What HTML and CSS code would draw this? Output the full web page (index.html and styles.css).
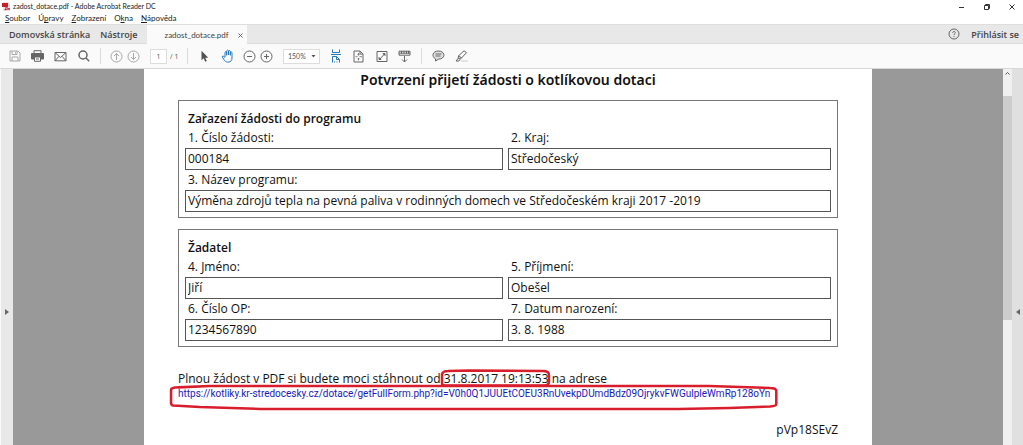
FILE: index.html
```html
<!DOCTYPE html>
<html lang="cs">
<head>
<meta charset="utf-8">
<meta name="viewport" content="width=device-width, initial-scale=1">
<title>zadost_dotace.pdf - Adobe Acrobat Reader DC</title>
<link rel="stylesheet" href="styles.css">
</head>
<body>
<div class="app">
  <header class="titlebar">
    <svg class="app-icon" width="9" height="9" viewBox="0 0 9 9"><path d="M1 0h5l2 2v7H1z" fill="#f5dcdc"/><path d="M0 1h6v4H0z" fill="#c8202a"/><path d="M3 8c1-2 1-3 1-4 1 2 2 3 4 3-2 0-4 0-5 1z" fill="none" stroke="#b8202a"/></svg>
    <span class="app-title">zadost_dotace.pdf - Adobe Acrobat Reader DC</span>
    <div class="window-controls">
      <button type="button" aria-label="Minimalizovat"><svg width="8" height="8" viewBox="0 0 8 8"><path d="M1 4.500h5"/></svg></button>
      <button type="button" aria-label="Obnovit"><svg width="8" height="8" viewBox="0 0 8 8"><path d="M1.500 2.500h4v4h-4zM2.500 2.500v-1h4v4h-1"/></svg></button>
      <button type="button" aria-label="Zavřít"><svg width="8" height="8" viewBox="0 0 8 8"><path d="M1.500 1.500l5 5m0-5l-5 5"/></svg></button>
    </div>
  </header>
  <nav class="menubar">
    <button type="button"><u>S</u>oubor</button>
    <button type="button">Ú<u>p</u>ravy</button>
    <button type="button"><u>Z</u>obrazení</button>
    <button type="button">O<u>k</u>na</button>
    <button type="button"><u>N</u>ápověda</button>
  </nav>
  <div class="tabbar">
    <div class="home-tabs">
      <button type="button">Domovská stránka</button>
      <button type="button">Nástroje</button>
    </div>
    <div class="doc-tab">
      <button type="button" class="doc-name">zadost_dotace.pdf</button>
      <button type="button" aria-label="Zavřít kartu"><svg width="5" height="5" viewBox="0 0 5 5"><path d="M.5.5l4 4m0-4l-4 4" stroke="#666"/></svg></button>
    </div>
    <div class="account">
      <button type="button" aria-label="Nápověda"><svg class="icon" width="12" height="12" viewBox="0 0 12 12"><circle cx="6" cy="6" r="5"/><path d="M4.600 4.800C4.700 3 7.400 3.100 7.300 4.700 7.200 5.600 6 5.700 6 6.900M6 7.900v1"/></svg></button>
      <button type="button" class="sign-in">Přihlásit se</button>
    </div>
  </div>
  <div class="toolbar">
    <button type="button" class="tool faint" aria-label="Uložit"><svg class="icon" width="12" height="12" viewBox="0 0 12 12"><path d="M1 1h8l2 2v8H1zM3 1v3.500h5V1M3 11V7h6v4M6.500 2v1.500"/></svg></button>
    <button type="button" class="tool" aria-label="Tisk"><svg class="icon" width="13" height="12" viewBox="0 0 13 12"><path d="M3 3V.7h7V3"/><path d="M.5 3.500h12v5.500H10V7H3v2H.5z" fill="#666"/><path d="M3.500 7v4.300h6V7M5 9h3"/></svg></button>
    <button type="button" class="tool" aria-label="E-mail"><svg class="icon" width="13" height="11" viewBox="0 0 13 11"><path d="M1 1.500h11v8.300H1zM1 1.500l5.500 5 5.500-5M1 9.800l4-4.500M12 9.800L8 5.300"/></svg></button>
    <button type="button" class="tool" aria-label="Hledat"><svg class="icon thick" width="12" height="12" viewBox="0 0 12 12"><circle cx="5" cy="5" r="4"/><path d="M8 8l3.200 3.200"/></svg></button>
    <span class="separator"></span>
    <span class="page-group">
      <button type="button" class="tool narrow faint" aria-label="Předchozí strana"><svg class="icon" width="13" height="13" viewBox="0 0 13 13"><circle cx="6.500" cy="6.500" r="5.500"/><path d="M6.500 10V3.500M4 6l2.500-2.500L9 6"/></svg></button>
      <button type="button" class="tool narrow faint" aria-label="Další strana"><svg class="icon" width="13" height="13" viewBox="0 0 13 13"><circle cx="6.500" cy="6.500" r="5.500"/><path d="M6.500 3v6.500M4 7l2.500 2.500L9 7"/></svg></button>
      <input class="page-number" type="text" value="1" aria-label="Strana">
      <span class="page-total">/ 1</span>
    </span>
    <span class="separator"></span>
    <button type="button" class="tool" aria-label="Výběr"><svg width="9" height="13" viewBox="0 0 9 13"><path d="M1.500.8v9.500l2.200-2 1.500 3.500 1.600-.7-1.500-3.400h3z" fill="#505050"/></svg></button>
    <button type="button" class="tool blue" aria-label="Ruka"><svg class="icon" width="14" height="14" viewBox="0 0 14 14"><path d="M4 8V3.200q.9-1.200 1.700 0V6.500M5.700 6V1.800q.9-1.300 1.800 0V6M7.500 6V2.200q.9-1.200 1.800 0V6.500M9.300 6V3.500q.9-1 1.700 0V9c0 5-5.600 5-7.500 2.500L1.200 7.800Q1.500 6.500 2.800 7.200L4 8.800"/></svg></button>
    <span class="zoom-group">
      <button type="button" class="tool narrow" aria-label="Zmenšit"><svg class="icon" width="13" height="13" viewBox="0 0 13 13"><circle cx="6.500" cy="6.500" r="5.500"/><path d="M4 6.500h5"/></svg></button>
      <button type="button" class="tool narrow" aria-label="Zvětšit"><svg class="icon" width="13" height="13" viewBox="0 0 13 13"><circle cx="6.500" cy="6.500" r="5.500"/><path d="M4 6.500h5M6.500 4v5"/></svg></button>
      <span class="zoom-box">
        <select aria-label="Přiblížení"><option>150%</option></select>
        <svg class="caret" width="5" height="3" viewBox="0 0 5 3"><path d="M.5 0h4l-2 2.500z" fill="#555"/></svg>
      </span>
    </span>
    <button type="button" class="tool blue" aria-label="Na šířku"><svg class="icon" width="12" height="14" viewBox="0 0 12 14"><path d="M2.500.5v3h7v-3M1 5.500h10"/><path d="M2.500 13.500v-6h4l3 3v3M6.500 7.500v3h3M4 13h1m1.500 0h1"/></svg></button>
    <button type="button" class="tool" aria-label="Celá strana"><svg class="icon" width="11" height="13" viewBox="0 0 11 13"><path d="M1 1h6l3 3v8H1zM7 1v3h3"/><path d="M5.500 3v2.200M5.500 8v2.500M2.500 6.700h2M6.500 6.700h2.500M4.500 4.300l1 1 1-1M4.500 9.200l1-1 1 1" stroke-width=".8"/></svg></button>
    <button type="button" class="tool" aria-label="Celá obrazovka"><svg class="icon" width="12" height="13" viewBox="0 0 12 13"><path d="M1 1.500h10v10H1zM3.500 9.500l5-5.500"/><path d="M7 3.500h2v2zM3 7.500v2h2z" fill="#666"/></svg></button>
    <button type="button" class="tool" aria-label="Posun stránek"><svg class="icon" width="13" height="13" viewBox="0 0 13 13"><path d="M1 1.200h11v4H1zM1 3.200h11M3.500 1v2.500M6 1v2.500M8.500 1v2.500M10.500 1v2.500M6.500 6v6M4 9.500L6.500 12 9 9.500"/></svg></button>
    <span class="separator"></span>
    <button type="button" class="tool" aria-label="Poznámka"><svg class="icon" width="13" height="12" viewBox="0 0 13 12"><path d="M3.500 8.800C-.8 6.500.5 1 6.500 1s7.500 6 2.200 7.900H7L3.500 11z" fill="#e0e0e0"/><path d="M3.500 4h6M3.500 6h5"/></svg></button>
    <button type="button" class="tool" aria-label="Zvýraznění"><svg class="icon" width="14" height="12" viewBox="0 0 14 12"><path d="M6 11h7" stroke="#ccc"/><path d="M3 8.500l.7-2.800L9 .8l2.500 1.800L6.500 8zM3.700 5.700L6.500 8M3 8.500L1 11h3l1.500-2.300"/></svg></button>
  </div>

  <div class="workspace">
    <button type="button" class="rail left" aria-label="Levý panel"><svg width="4" height="6" viewBox="0 0 4 6"><path d="M0 0l4 3-4 3z" fill="#666"/></svg></button>
    <main class="canvas">
      <article class="sheet">
        <h1>Potvrzení přijetí žádosti o kotlíkovou dotaci</h1>
        <section class="form-box">
          <h2>Zařazení žádosti do programu</h2>
          <div class="field"><label for="f1">1. Číslo žádosti:</label><input id="f1" type="text" value="000184"></div>
          <div class="field"><label for="f2">2. Kraj:</label><input id="f2" type="text" value="Středočeský"></div>
          <div class="field wide"><label for="f3">3. Název programu:</label><input id="f3" type="text" value="Výměna zdrojů tepla na pevná paliva v rodinných domech ve Středočeském kraji 2017 -2019"></div>
        </section>
        <section class="form-box">
          <h2>Žadatel</h2>
          <div class="field"><label for="f4">4. Jméno:</label><input id="f4" type="text" value="Jiří"></div>
          <div class="field"><label for="f5">5. Příjmení:</label><input id="f5" type="text" value="Obešel"></div>
          <div class="field"><label for="f6">6. Číslo OP:</label><input id="f6" type="text" value="1234567890"></div>
          <div class="field"><label for="f7">7. Datum narození:</label><input id="f7" type="text" value="3. 8. 1988"></div>
        </section>
        <div class="download">
          <p>Plnou žádost v PDF si budete moci stáhnout od <span class="marked">31.8.2017 19:13:53<svg class="mark date-mark" viewBox="0 0 112 18" preserveAspectRatio="none"><path d="M2 14V5Q3 2 8 2L30 1.500 104 2Q110 2 110 6V13Q110 16 106 16.500H5Q2 16.500 2 14z"/></svg></span> na adrese</p>
          <div class="marked link-line"><a href="https://kotliky.kr-stredocesky.cz/dotace/getFullForm.php?id=V0h0Q1JUUEtCOEU3RnUvekpDUmdBdz09OjrykvFWGulpleWmRp128oYn">https://kotliky.kr-stredocesky.cz/dotace/getFullForm.php?id=V0h0Q1JUUEtCOEU3RnUvekpDUmdBdz09OjrykvFWGulpleWmRp128oYn</a><svg class="mark link-mark" viewBox="0 0 598 27" preserveAspectRatio="none"><path d="M2 6Q2 4 6 3.500L40 2H530L590 4Q596 4 596 7V20Q596 22 590 22.500L550 24 500 25H90L30 23 4 21.500Q2 21 2 19z"/></svg></div>
        </div>
        <p class="code">pVp18SEvZ</p>
      </article>
    </main>
    <div class="scrollbar"><svg width="5" height="3" viewBox="0 0 5 3"><path d="M.5 2.500l2-2 2 2" fill="none" stroke="#555"/></svg><div class="thumb"></div></div>
    <button type="button" class="rail right" aria-label="Pravý panel"><svg width="4" height="6" viewBox="0 0 4 6"><path d="M4 0L0 3l4 3z" fill="#666"/></svg></button>
  </div>
</div>
</body>
</html>
```
FILE: styles.css
```css
* { box-sizing: border-box; }
body { margin: 0; font-family: "Open Sans", "Noto Sans", sans-serif; color: #222; background: #fff; }
button { display: flex; align-items: center; justify-content: center; margin: 0; padding: 0; border: 0; background: none; color: inherit; font: inherit; white-space: nowrap; }
svg { display: block; flex: none; }
h1, h2, p { margin: 0; }
.app { display: flex; flex-direction: column; height: 100vh; overflow: hidden; }

.titlebar { display: flex; align-items: center; flex: none; height: 13px; padding-left: 2px; gap: 2px; font: 7px/13px Lato, "Open Sans", sans-serif; }
.window-controls { display: flex; gap: 17px; margin-left: auto; padding-right: 7px; }
.window-controls svg { fill: none; stroke: #333; }
.menubar { display: flex; flex: none; height: 11px; padding-left: 5px; gap: 8px; font: 8px/11px Lato, "Open Sans", sans-serif; }
.menubar button { display: block; }
.tabbar { display: flex; flex: none; height: 20px; padding-left: 9px; background: #e8e8e8; border-top: 1px solid #dedede; border-bottom: 1px solid #dcdcdc; font-size: 9px; color: #444; }
.home-tabs { display: flex; gap: 10px; margin-right: 9px; font-weight: 600; }
.doc-tab { display: flex; align-items: center; height: 20px; padding: 0 4px 0 18px; gap: 9px; background: #fafafa; font: 8px Lato, "Open Sans", sans-serif; }
.account { display: flex; gap: 11px; margin-left: auto; padding-right: 4px; }
.sign-in { font-weight: 600; }

.toolbar { display: flex; align-items: center; flex: none; height: 25px; padding-left: 3px; background: #fafafa; border-bottom: 1px solid #d8d8d8; }
.icon { fill: none; stroke: #666; }
.thick { stroke-width: 1.5; }
.faint .icon { stroke: #a8a8a8; }
.blue .icon { stroke: #2878c0; }
.tool { width: 23px; height: 24px; }
.tool.narrow { width: 17px; }
.separator { width: 1px; height: 16px; margin: 0 5px; background: #ddd; }
.page-group { display: flex; align-items: center; padding-left: 2px; }
.page-number { width: 17px; height: 15px; margin-left: 8px; padding: 0; border: 1px solid #ddd; background: #fff; text-align: center; font: 7px "Open Sans", sans-serif; color: #555; }
.page-total { width: 15px; padding-left: 3px; font-size: 7px; color: #555; }
.zoom-group { display: flex; align-items: center; margin: 0 4px 0 2px; }
.zoom-box { position: relative; margin-left: 8px; }
.zoom-box select { display: block; width: 37px; height: 15px; padding: 0 0 0 4px; appearance: none; border: 1px solid #ddd; border-radius: 0; background: #fff; font: 7px Lato, "Open Sans", sans-serif; color: #555; }
.caret { position: absolute; right: 4px; top: 6px; pointer-events: none; }

.workspace { display: flex; flex: 1; min-height: 0; }
.rail { flex: none; }
.rail.left { width: 13px; background: #e8e8e8; border-left: 1px solid #fafafa; }
.rail svg { margin-top: 110px; }
.rail.right { width: 11px; background: #e0e0e0; }
.canvas { display: flex; flex: 1; min-width: 0; padding: 0 131px; background: #999; }
.scrollbar { display: flex; flex-direction: column; align-items: center; flex: none; width: 9px; padding-top: 3px; background: #f0f0f0; }
.thumb { width: 9px; height: 60%; margin-top: 21px; background: #cdcdcd; }

.sheet { flex: 1; min-width: 0; padding: 0 34px; background: #fff; font: 12px/20px "Open Sans", "Noto Sans", sans-serif; color: #111; }
.sheet h1 { height: 31px; font: 600 14px/22px "Noto Sans", "Open Sans", sans-serif; text-align: center; }
.form-box { display: grid; grid-template-columns: 318fr 323fr; column-gap: 5px; margin-bottom: 11px; padding: 8px 6px 5px; border: 1px solid #777; }
.form-box h2 { grid-column: 1 / -1; padding-left: 3px; font-size: 12px; line-height: 19px; font-weight: 600; }
.field { display: flex; flex-direction: column; min-width: 0; }
.field.wide { grid-column: 1 / -1; }
.field label { padding-left: 3px; }
.field input { width: 100%; height: 22px; padding: 0 2px 2px; border: 1px solid #555; background: #fff; font: inherit; color: inherit; }
.download { padding-top: 11px; white-space: nowrap; }
.marked { position: relative; }
.mark { position: absolute; fill: none; stroke: #d81e2c; stroke-width: 2.5; pointer-events: none; }
.date-mark { left: -4px; top: -1px; width: calc(100% + 6px); height: 18px; }
.link-line { width: fit-content; font: 10px/10px Roboto, "Open Sans", sans-serif; }
.link-line a { color: #1a1ab8; text-decoration: none; }
.link-mark { left: -9px; top: -5px; width: calc(100% + 17px); height: 27px; }
.code { padding-top: 21px; text-align: right; }
```
